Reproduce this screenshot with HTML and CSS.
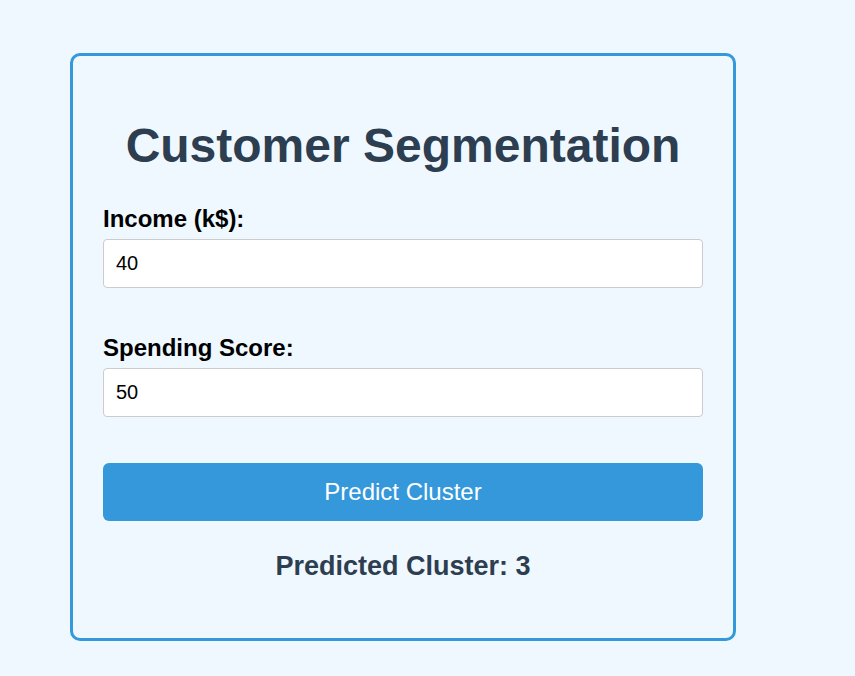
FILE: index.html
```html
<!DOCTYPE html>
<html lang="en">
<head>
<meta charset="utf-8">
<title>Customer Segmentation</title>
<link rel="stylesheet" href="styles.css">
</head>
<body>
<div class="card">
  <h1 class="title">Customer Segmentation</h1>
  <form class="form">
    <div class="field">
      <label class="label" for="income">Income (k$):</label>
      <input class="input" id="income" type="text" value="40">
    </div>
    <div class="field">
      <label class="label" for="score">Spending Score:</label>
      <input class="input" id="score" type="text" value="50">
    </div>
    <button class="button" type="button">Predict Cluster</button>
  </form>
  <p class="result">Predicted Cluster: 3</p>
</div>
</body>
</html>
```

FILE: styles.css
```css
html, body {
  margin: 0;
  background: #f0f8ff;
}
body {
  padding: 53px 0 0 70px;
  font-family: "Liberation Sans", Arial, sans-serif;
}
.card {
  box-sizing: border-box;
  width: 666px;
  height: 588px;
  border: 3px solid #3498db;
  border-radius: 10px;
  background: #f0f8ff;
  padding: 30px;
}
.title {
  margin: 32px 0 32px;
  font-size: 48px;
  font-weight: bold;
  color: #2c3e50;
  text-align: center;
  line-height: 55px;
}
.form {
  display: flex;
  flex-direction: column;
}
.field {
  display: flex;
  flex-direction: column;
  margin-bottom: 46px;
}
.label {
  font-size: 24px;
  font-weight: bold;
  color: #000;
  line-height: 28px;
  margin-bottom: 6px;
}
.input {
  box-sizing: border-box;
  height: 49px;
  width: 600px;
  border: 1px solid #cccccc;
  border-radius: 4px;
  background: #fff;
  padding: 0 12px;
  font-family: "Liberation Sans", Arial, sans-serif;
  font-size: 20px;
  color: #000;
}
.button {
  height: 58px;
  width: 600px;
  margin-top: 0;
  border: none;
  border-radius: 6px;
  background: #3498db;
  color: #fff;
  font-family: "Liberation Sans", Arial, sans-serif;
  font-size: 24px;
}
.result {
  margin: 30px 0 0;
  text-align: center;
  font-size: 27px;
  font-weight: bold;
  color: #2c3e50;
  line-height: 31px;
}
```
